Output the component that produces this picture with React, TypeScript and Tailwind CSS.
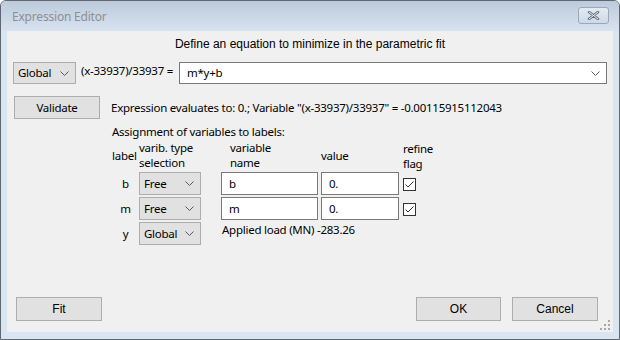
import React from 'react'

const ui = "font-['Noto_Sans',sans-serif] text-[11.5px] tracking-[-0.25px]"
const classic = "font-['Liberation_Sans',Arial,sans-serif] text-[12px] tracking-normal text-black"

function Chevron() {
  return (
    <svg width="9" height="5" viewBox="0 0 9 5" className="shrink-0">
      <path d="M0.5 0.5 L4.5 4.5 L8.5 0.5" fill="none" stroke="#5a5a5a" strokeWidth="1" />
    </svg>
  )
}

function Select({ value, className = '' }: { value: string; className?: string }) {
  return (
    <div
      className={`flex items-center justify-between bg-[#e1e1e1] border border-[#adadad] pl-[4px] pr-[6px] ${className}`}
    >
      <span className="leading-[16px]">{value}</span>
      <Chevron />
    </div>
  )
}

function TextBox({ value, className = '' }: { value: string; className?: string }) {
  return (
    <div className={`flex items-center bg-white border border-[#7a7a7a] pl-[7px] ${className}`}>
      <span className="leading-[16px]">{value}</span>
    </div>
  )
}

function CheckBox() {
  return (
    <div className="w-[13px] h-[13px] bg-white border border-[#333333] flex items-center justify-center">
      <svg width="11" height="11" viewBox="0 0 11 11">
        <path d="M1.5 5.5 L4 8 L9.5 2.5" fill="none" stroke="#333333" strokeWidth="1" />
      </svg>
    </div>
  )
}

function Button({ label, className = '' }: { label: string; className?: string }) {
  return (
    <div className={`flex items-center justify-center bg-[#e1e1e1] border border-[#adadad] ${className}`}>
      {label}
    </div>
  )
}

const rows = [
  { label: 'b', type: 'Free', name: 'b', value: '0.', refine: true },
  { label: 'm', type: 'Free', name: 'm', value: '0.', refine: true },
  { label: 'y', type: 'Global', note: 'Applied load (MN) -283.26' },
]

export default function App() {
  return (
    <div className="w-[620px] h-[340px] bg-[#dae5f2] border border-[#5f6770] rounded-t-[6px] flex flex-col overflow-hidden">
      {/* title bar */}
      <div className="h-[30px] shrink-0 bg-gradient-to-b from-[#bccadb] to-[#d8e3f0] flex items-center justify-between pl-[11px] pr-[10px]">
        <span className="font-['Noto_Sans',sans-serif] text-[12px] tracking-[-0.2px] text-[#8f8f8f] leading-[16px] mt-[1px]">
          Expression Editor
        </span>
        <div className="w-[31px] h-[17px] mb-[2px] rounded-[3px] border border-[#9aa9ba] bg-gradient-to-b from-[#e3eaf2] to-[#cfdae6] flex items-center justify-center">
          <svg width="13" height="9" viewBox="0 0 13 9">
            <path d="M2 1 L11 8 M11 1 L2 8" stroke="#5e6a78" strokeWidth="2.6" strokeLinecap="round" />
            <path d="M2 1 L11 8 M11 1 L2 8" stroke="#f4f6f9" strokeWidth="1" strokeLinecap="round" />
          </svg>
        </div>
      </div>

      <div className="flex-1 px-[6px] pb-[7px] flex flex-col">
        <div className={`relative flex-1 bg-[#f0f0f0] flex flex-col text-black ${ui}`}>
          <div className={`${classic} text-center leading-[16px] pt-[5px]`}>
            Define an equation to minimize in the parametric fit
          </div>

          <div className="flex items-start mt-[10px]">
            <Select value="Global" className="ml-[6px] w-[63px] h-[22px]" />
            <span className="ml-[5px] leading-[16px] mt-[1px] whitespace-nowrap">(x-33937)/33937 =</span>
            <div className="ml-auto mr-[6px] w-[428px] h-[22px] bg-white border border-[#7a7a7a] flex items-center justify-between pl-[7px] pr-[6px]">
              <span className="leading-[16px]">m*y+b</span>
              <Chevron />
            </div>
          </div>

          <div className="flex items-center mt-[12px]">
            <Button label="Validate" className="ml-[7px] w-[86px] h-[23px]" />
            <span className="ml-[11px] leading-[16px] mt-[1px] whitespace-nowrap">
              Expression evaluates to: 0.; Variable "(x-33937)/33937" = -0.00115915112043
            </span>
          </div>

          <div className="pl-[105px] mt-[5px] leading-[16px]">Assignment of variables to labels:</div>

          <div className="pl-[105px] flex items-center leading-[15px] h-[30px]">
            <div className="w-[25px] ml-[0px]">label</div>
            <div className="w-[82px] ml-[2px]">
              varib. type
              <br />
              selection
            </div>
            <div className="w-[100px] pl-[9px]">
              variable
              <br />
              name
            </div>
            <div className="w-[82px] mt-[1px]">value</div>
            <div className="mt-[1px]">
              refine
              <br />
              flag
            </div>
          </div>

          <div className="pl-[105px] mt-[2px] flex flex-col gap-[2px]">
            {rows.map((r) => (
              <div key={r.label} className="flex items-start h-[23px]">
                <div className="w-[25px] h-[23px] flex items-center justify-center leading-[16px] ml-[1px]">
                  {r.label}
                </div>
                <Select value={r.type} className="ml-[1px] w-[62px] h-[23px]" />
                {r.note ? (
                  <span className="ml-[21px] leading-[16px] whitespace-nowrap">{r.note}</span>
                ) : (
                  <>
                    <TextBox value={r.name!} className="ml-[20px] w-[97px] h-[23px]" />
                    <TextBox value={r.value!} className="ml-[3px] w-[78px] h-[23px]" />
                    <div className="ml-[4px] h-[23px] flex items-center mt-[1px]">
                      <CheckBox />
                    </div>
                  </>
                )}
              </div>
            ))}
          </div>

          <div className={`mt-auto mb-[11px] flex ${classic}`}>
            <Button label="Fit" className="ml-[9px] w-[86px] h-[24px]" />
            <Button label="OK" className="ml-auto w-[85px] h-[24px]" />
            <Button label="Cancel" className="ml-[11px] mr-[15px] w-[86px] h-[24px]" />
          </div>

          {/* size grip */}
          <div className="absolute right-[3px] bottom-[2px] grid grid-cols-3 gap-[2px]">
            <span className="w-[2px] h-[2px]" />
            <span className="w-[2px] h-[2px]" />
            <span className="w-[2px] h-[2px] bg-[#a8a8a8]" />
            <span className="w-[2px] h-[2px]" />
            <span className="w-[2px] h-[2px] bg-[#a8a8a8]" />
            <span className="w-[2px] h-[2px] bg-[#a8a8a8]" />
            <span className="w-[2px] h-[2px] bg-[#a8a8a8]" />
            <span className="w-[2px] h-[2px] bg-[#a8a8a8]" />
            <span className="w-[2px] h-[2px] bg-[#a8a8a8]" />
          </div>
        </div>
      </div>
    </div>
  )
}
